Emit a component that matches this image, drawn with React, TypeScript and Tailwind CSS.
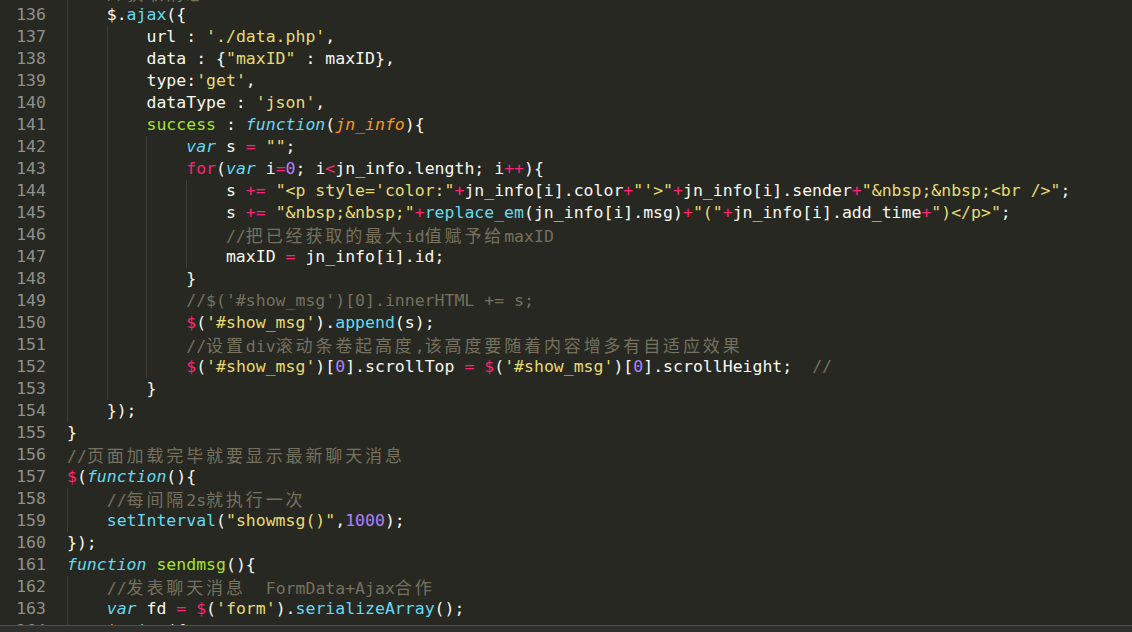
import React from "react";

type Tok = [string, string] | string;

const cls: Record<string, string> = {
  k: "text-[#f92672]",
  s: "text-[#e6db74]",
  n: "text-[#ae81ff]",
  c: "text-[#75715e]",
  f: "text-[#66d9ef]",
  i: "text-[#66d9ef] italic",
  g: "text-[#a6e22e]",
  p: "text-[#fd971f] italic",
};

const cjkRe = /([\u3000-\u9fff\uff00-\uffef]+)/;

function renderText(text: string, key: string) {
  const parts = text.split(cjkRe).filter((p) => p.length > 0);
  return parts.map((p, idx) =>
    cjkRe.test(p) ? (
      <span
        key={key + "-" + idx}
        className="text-[17px] tracking-[2.87px]"
        style={{ fontFamily: '"Noto Sans CJK SC", sans-serif' }}
      >
        {p}
      </span>
    ) : (
      <React.Fragment key={key + "-" + idx}>{p}</React.Fragment>
    )
  );
}

type Line = { n: number; ind: number; t: Tok[] };

const lines: Line[] = [
  { n: 135, ind: 1, t: [["c", "//获取消息"]] },
  { n: 136, ind: 1, t: ["$.", ["f", "ajax"], "({"] },
  { n: 137, ind: 2, t: ["url : ", ["s", "'./data.php'"], ","] },
  { n: 138, ind: 2, t: ["data : {", ["s", '"maxID"'], " : maxID},"] },
  { n: 139, ind: 2, t: ["type:", ["s", "'get'"], ","] },
  { n: 140, ind: 2, t: ["dataType : ", ["s", "'json'"], ","] },
  {
    n: 141,
    ind: 2,
    t: [["g", "success"], " : ", ["i", "function"], "(", ["p", "jn_info"], "){"],
  },
  { n: 142, ind: 3, t: [["i", "var"], " s ", ["k", "="], " ", ["s", '""'], ";"] },
  {
    n: 143,
    ind: 3,
    t: [
      ["k", "for"],
      "(",
      ["i", "var"],
      " i",
      ["k", "="],
      ["n", "0"],
      "; i",
      ["k", "<"],
      "jn_info.length; i",
      ["k", "++"],
      "){",
    ],
  },
  {
    n: 144,
    ind: 4,
    t: [
      "s ",
      ["k", "+="],
      " ",
      ["s", "\"<p style='color:\""],
      ["k", "+"],
      "jn_info[i].color",
      ["k", "+"],
      ["s", "\"'>\""],
      ["k", "+"],
      "jn_info[i].sender",
      ["k", "+"],
      ["s", '"&nbsp;&nbsp;<br />"'],
      ";",
    ],
  },
  {
    n: 145,
    ind: 4,
    t: [
      "s ",
      ["k", "+="],
      " ",
      ["s", '"&nbsp;&nbsp;"'],
      ["k", "+"],
      ["f", "replace_em"],
      "(jn_info[i].msg)",
      ["k", "+"],
      ["s", '"("'],
      ["k", "+"],
      "jn_info[i].add_time",
      ["k", "+"],
      ["s", '")</p>"'],
      ";",
    ],
  },
  { n: 146, ind: 4, t: [["c", "//把已经获取的最大id值赋予给maxID"]] },
  { n: 147, ind: 4, t: ["maxID ", ["k", "="], " jn_info[i].id;"] },
  { n: 148, ind: 3, t: ["}"] },
  { n: 149, ind: 3, t: [["c", "//$('#show_msg')[0].innerHTML += s;"]] },
  {
    n: 150,
    ind: 3,
    t: [["k", "$"], "(", ["s", "'#show_msg'"], ").", ["f", "append"], "(s);"],
  },
  { n: 151, ind: 3, t: [["c", "//设置div滚动条卷起高度,该高度要随着内容增多有自适应效果"]] },
  {
    n: 152,
    ind: 3,
    t: [
      ["k", "$"],
      "(",
      ["s", "'#show_msg'"],
      ")[",
      ["n", "0"],
      "].scrollTop ",
      ["k", "="],
      " ",
      ["k", "$"],
      "(",
      ["s", "'#show_msg'"],
      ")[",
      ["n", "0"],
      "].scrollHeight;  ",
      ["c", "//"],
    ],
  },
  { n: 153, ind: 2, t: ["}"] },
  { n: 154, ind: 1, t: ["});"] },
  { n: 155, ind: 0, t: ["}"] },
  { n: 156, ind: 0, t: [["c", "//页面加载完毕就要显示最新聊天消息"]] },
  { n: 157, ind: 0, t: [["k", "$"], "(", ["i", "function"], "(){"] },
  { n: 158, ind: 1, t: [["c", "//每间隔2s就执行一次"]] },
  {
    n: 159,
    ind: 1,
    t: [["f", "setInterval"], "(", ["s", '"showmsg()"'], ",", ["n", "1000"], ");"],
  },
  { n: 160, ind: 0, t: ["});"] },
  { n: 161, ind: 0, t: [["i", "function"], " ", ["g", "sendmsg"], "(){"] },
  { n: 162, ind: 1, t: [["c", "//发表聊天消息  FormData+Ajax合作"]] },
  {
    n: 163,
    ind: 1,
    t: [
      ["i", "var"],
      " fd ",
      ["k", "="],
      " ",
      ["k", "$"],
      "(",
      ["s", "'form'"],
      ").",
      ["f", "serializeArray"],
      "();",
    ],
  },
  { n: 164, ind: 1, t: ["$.", ["f", "ajax"], "({"] },
];

function CodeLine({ line }: { line: Line }) {
  const guides = [];
  for (let i = 0; i < line.ind; i++) {
    guides.push(
      <span
        key={"g" + i}
        className="inline-block w-[4ch] h-[22px] align-top border-l border-[#3c3d36]"
      />
    );
  }
  return (
    <div className="flex h-[22px] leading-[22px]">
      <div className="w-[67px] shrink-0 pr-[21px] text-right text-[#8f908a]">
        {line.n}
      </div>
      <div className="whitespace-pre text-[#f8f8f2]">
        {guides}
        {line.t.map((tok, idx) =>
          typeof tok === "string" ? (
            <React.Fragment key={idx}>{renderText(tok, "t" + idx)}</React.Fragment>
          ) : (
            <span key={idx} className={cls[tok[0]]}>
              {renderText(tok[1], "t" + idx)}
            </span>
          )
        )}
      </div>
    </div>
  );
}

export default function App() {
  return (
    <div
      className="w-[1132px] h-[632px] flex flex-col overflow-hidden bg-[#272822] text-[16.5px]"
      style={{ fontFamily: '"DejaVu Sans Mono", "Noto Sans CJK SC", monospace' }}
    >
      <div className="h-[625px] shrink-0 overflow-hidden">
        <div className="mt-[-18px]">
          {lines.map((l) => (
            <CodeLine key={l.n} line={l} />
          ))}
        </div>
      </div>
      <div className="flex-1 border-t border-[#4e4e4a] bg-[#2f2f2d]" />
    </div>
  );
}
